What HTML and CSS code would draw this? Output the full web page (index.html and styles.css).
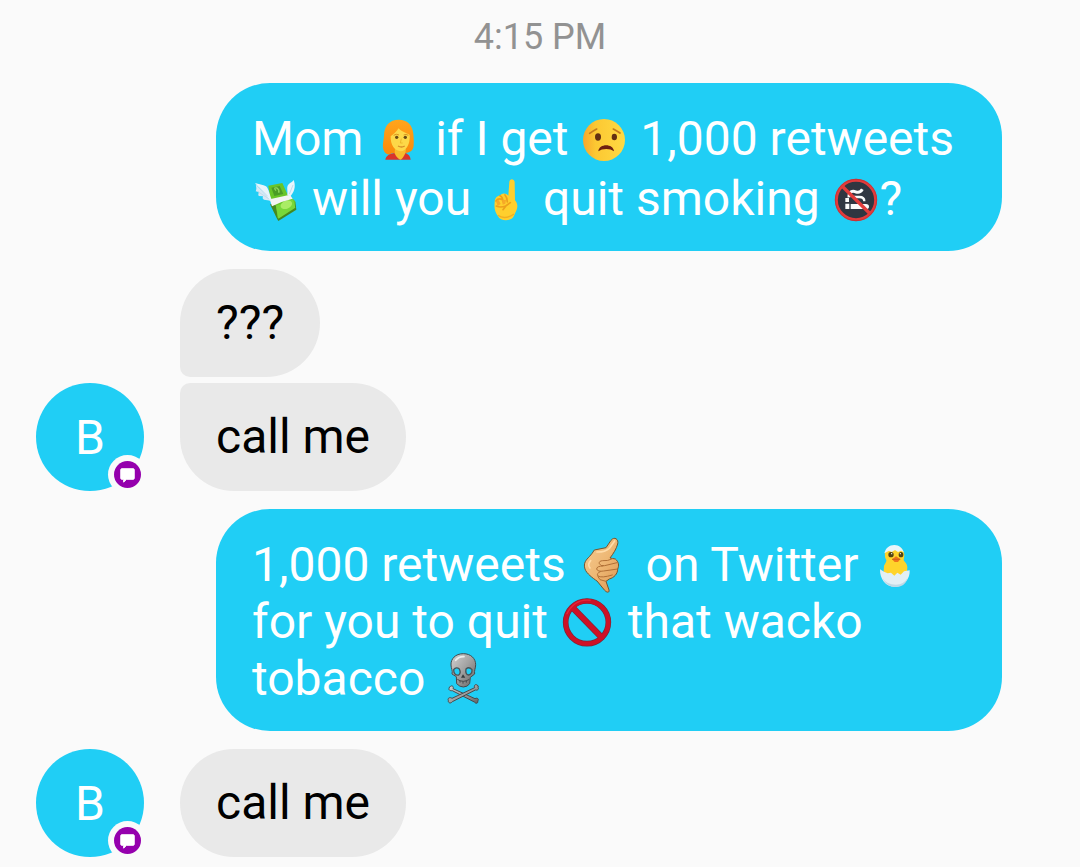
FILE: index.html
```html
<!DOCTYPE html>
<html lang="en">
<head>
<meta charset="utf-8">
<meta name="viewport" content="width=device-width, initial-scale=1">
<title>Messages</title>
<link rel="stylesheet" href="styles.css">
</head>
<body>
<main class="thread">
  <time class="stamp">4:15 PM</time>

  <p class="bubble sent roomy">Mom <svg class="emoji" viewBox="15 15 144 144" role="img" aria-label="woman">
      <defs><linearGradient id="hair" x2="0" y2="1"><stop stop-color="#ffa51c"/><stop offset="1" stop-color="#f98a0b"/></linearGradient></defs>
      <path d="M87 29C58 29 43 47 42 76C41 95 35 108 42 123C47 134 58 136 66 130L112 128C124 127 132 116 131 103C132 94 131 83 130 71C127 43 111 29 87 29Z" fill="url(#hair)"/>
      <path d="M46 149C48 136 58 131 77 128L107 129C116 133 121 139 122 149Z" fill="#d9352b"/>
      <path d="M75 116H108L106 130Q97 149 91 149Q80 145 74 130Z" fill="#f7bd2d"/>
      <path d="M62 79C69 74 79 66 86 55C94 66 109 68 119 75C121 101 109 123 93 124C74 123 61 105 62 79Z" fill="#fdd848"/>
      <path d="M71 76Q79 70 87 75M101 75Q108 71 115 76" fill="none" stroke="#d89422" stroke-width="3"/>
      <ellipse cx="80" cy="82" rx="5" ry="5" fill="#674913"/><ellipse cx="106" cy="82" rx="5" ry="5" fill="#674913"/>
      <path d="M94 86L91 99H98" fill="none" stroke="#eeb82b" stroke-width="3"/>
      <path d="M84 108Q95 114 104 108" fill="none" stroke="#d78d28" stroke-width="4"/>
    </svg> if I get <svg class="emoji" viewBox="18 15 144 144" role="img" aria-label="worried face">
      <defs><linearGradient id="face"><stop stop-color="#f7a72d"/><stop offset=".3" stop-color="#fcc832"/><stop offset="1" stop-color="#ffda43"/></linearGradient></defs>
      <circle cx="90" cy="90" r="63" fill="url(#face)"/>
      <path d="M47 70Q57 63 68 57M118 57Q129 63 138 69" fill="none" stroke="#c47b1e" stroke-width="5" stroke-linecap="round"/>
      <ellipse cx="72" cy="81" rx="9" ry="11" fill="#643012"/><ellipse cx="121" cy="81" rx="8" ry="10" fill="#643012"/>
      <path d="M73 124C75 100 118 100 120 124Q111 117 97 117Q82 117 73 124Z" fill="#6e2011"/>
    </svg> 1,000 retweets <svg class="emoji" viewBox="24 15 144 144" role="img" aria-label="money with wings">
      <path d="M78 103L98 144L103 153L157 119L154 96Z" fill="#45891f"/>
      <path d="M73 47L115 39L130 72L154 94L153 112L101 145L96 108L80 92Z" fill="#69c529"/>
      <path d="M96 107L147 87L154 113L103 146Z" fill="#78d73a"/>
      <path d="M82 53L107 48L118 72L91 78Z" fill="#4b9c26"/>
      <path d="M96 62Q87 51 99 54Q107 60 104 68" fill="none" stroke="#8ed65b" stroke-width="4"/>
      <ellipse cx="127" cy="104" rx="18" ry="12" transform="rotate(-22 127 104)" fill="#aaec65"/>
      <path d="M77 88L138 74L146 86Q114 93 84 109Z" fill="#f4f4f3"/>
      <path d="M79 94L33 39C44 43 57 43 66 49C75 57 76 73 83 89Z" fill="#e8f4fb"/>
      <path d="M35 43Q39 57 35 64L46 66Q40 73 44 78L57 79Q54 87 60 89L80 92" fill="#d7e9f5"/>
      <path d="M130 75C132 62 126 51 134 43C140 37 145 36 149 30C154 43 155 61 140 78Z" fill="#e8f4fb"/>
      <path d="M43 50L71 79M40 64L74 86M147 45L136 72" fill="none" stroke="#c0dcec" stroke-width="3"/>
    </svg> will you <svg class="emoji" viewBox="15 15 144 144" role="img" aria-label="index finger pointing up">
      <path d="M94 35C95 25 108 25 110 35L111 91C118 99 120 108 116 119L108 137C100 156 67 154 60 139C51 128 48 113 50 98C50 84 56 77 66 77C72 68 84 69 91 77Z" fill="#ffcf2d"/>
      <path d="M54 93Q61 83 73 89M66 77Q75 81 75 95M81 75Q88 83 88 96M55 108Q67 114 83 108L97 98M83 109L75 119" fill="none" stroke="#eda01c" stroke-width="5" stroke-linecap="round"/>
      <path d="M54 94L62 90L68 102L59 108ZM72 91L84 89L82 101L74 104Z" fill="#f7a928"/>
      <path d="M60 136Q80 151 108 132" fill="none" stroke="#f3af20" stroke-width="4"/>
    </svg> quit smoking <svg class="emoji" viewBox="24 15 144 144" role="img" aria-label="no smoking">
      <circle cx="96" cy="90" r="59" fill="#303641" stroke="#e33b3b" stroke-width="9"/>
      <path d="M64 101H76V117H64ZM80 102H126Q135 103 135 110Q135 117 126 117H80ZM64 84H75V96H64Z" fill="#fafafa"/>
      <path d="M75 82C74 64 86 61 96 66C105 69 111 65 115 58" fill="none" stroke="#fafafa" stroke-width="9"/>
      <path d="M88 81H106Q121 81 121 94" fill="none" stroke="#fafafa" stroke-width="7"/>
      <path d="M54 48L139 132" stroke="#e33b3b" stroke-width="10"/>
      <circle cx="96" cy="90" r="62" fill="none" stroke="#b92f35" stroke-width="2"/>
    </svg>?</p>

  <section class="received">
    <div class="messages">
      <p class="bubble plain first">???</p>
      <p class="bubble plain last">call me</p>
    </div>
    <div class="avatar">B<span class="badge"><svg viewBox="0 0 28 28" aria-hidden="true"><circle cx="14" cy="14" r="14" fill="#9500ad"/><path d="M8 8H20Q21 8 21 9V18Q21 19 20 19H13L10 22V19H8Q7 19 7 18V9Q7 8 8 8Z" fill="#fff" stroke="#fff" stroke-linejoin="round"/></svg></span></div>
  </section>

  <p class="bubble sent">1,000 retweets <svg class="emoji wide" viewBox="24 33 168 144" role="img" aria-label="call me hand">
      <defs><linearGradient id="skin" x2="1" y2="1"><stop stop-color="#f4ca91"/><stop offset=".5" stop-color="#eeb875"/><stop offset="1" stop-color="#dc9650"/></linearGradient></defs>
      <path d="M73 60L108 53L123 31C133 18 147 28 143 42C139 57 130 71 120 84L136 87C146 95 148 107 143 117C143 132 132 143 118 147L108 154L117 180C119 189 110 188 104 181L81 153C69 145 49 130 45 117C39 99 49 89 58 80Q68 69 73 60Z" fill="url(#skin)" stroke="#74542e" stroke-width="3"/>
      <path d="M128 86Q112 94 98 92Q86 93 88 101Q91 109 104 107L141 98M99 108Q80 108 80 117Q83 126 101 123L143 117M91 125Q78 130 84 138Q94 145 127 135M84 140L90 149L108 154" fill="none" stroke="#b06f35" stroke-width="3" stroke-linecap="round"/>
      <path d="M81 66Q103 67 118 55L134 33M62 92Q51 104 60 114" fill="none" stroke="#ffdca9" stroke-width="5" stroke-linecap="round"/>
    </svg> on Twitter <svg class="emoji mid" viewBox="18 33 156 144" role="img" aria-label="hatching chick">
      <path d="M63 66Q71 48 93 47Q116 50 120 69C123 77 119 83 119 91C123 97 130 102 130 112L128 138H58L60 107C64 99 68 96 67 90Q61 82 63 66Z" fill="#ffd42b"/>
      <path d="M61 70C65 54 76 45 91 45C106 45 116 55 119 67L111 62L102 66L93 60L83 66L75 62Z" fill="#eaf5fa"/>
      <ellipse cx="81" cy="74" rx="8" ry="8" fill="#514414"/><ellipse cx="111" cy="74" rx="7" ry="8" fill="#514414"/><circle cx="83" cy="71" r="2" fill="#fff"/><circle cx="109" cy="71" r="2" fill="#fff"/>
      <path d="M84 88L96 79L109 87L102 96H92Z" fill="#ef751d"/><path d="M84 88H109" stroke="#bd501b" stroke-width="2"/>
      <path d="M48 118L60 125L71 130L81 128L91 137L100 128L110 134L120 124L137 121C139 146 120 170 94 171C65 171 47 147 48 118Z" fill="#e3eff5"/>
      <path d="M55 143Q68 164 96 164Q120 163 131 143Q124 171 94 171Q67 170 55 143Z" fill="#bfd9e6"/>
    </svg> for you to quit <svg class="emoji wide" viewBox="30 24 168 144" role="img" aria-label="prohibited">
      <circle cx="111" cy="97" r="64" fill="none" stroke="#7c2638" stroke-width="17"/>
      <path d="M66 51L156 143" stroke="#7c2638" stroke-width="19"/>
      <circle cx="111" cy="97" r="64" fill="none" stroke="#ce1126" stroke-width="13"/>
      <path d="M66 51L156 143" stroke="#ce1126" stroke-width="15"/>
      <path d="M50 73Q73 25 122 31" fill="none" stroke="#e4283a" stroke-width="4"/>
    </svg> that wacko tobacco <svg class="emoji mid" viewBox="21 30 156 144" role="img" aria-label="skull and crossbones">
      <defs><linearGradient id="bone" x2="1" y2="1"><stop stop-color="#d2d2d2"/><stop offset=".5" stop-color="#a1a1a1"/><stop offset="1" stop-color="#626262"/></linearGradient></defs>
      <g fill="url(#bone)" stroke="#464b4d" stroke-width="3">
        <path d="M62 124C67 120 72 126 69 131L135 161C141 157 149 162 143 168C146 174 138 178 133 171L67 137C60 138 54 134 58 129Q56 126 62 124Z"/>
        <path d="M141 120C136 116 131 122 134 128L66 160C59 155 52 160 55 166C53 172 61 178 67 170L136 135C143 137 148 132 144 127Q147 122 141 120Z"/>
        <path d="M100 26C76 26 62 42 63 60C63 70 69 77 66 87L79 95L80 116Q89 126 100 126Q112 126 119 116L121 97L134 87C132 76 137 70 137 59C137 41 123 26 100 26Z"/>
      </g>
      <path d="M71 74Q79 64 88 72Q94 84 86 90Q71 92 71 74ZM108 72Q117 64 126 74Q127 87 116 90Q105 88 108 72Z" fill="#20cef5" stroke="#4b5356" stroke-width="4"/>
      <path d="M99 88L93 98H106Z" fill="#353b3e"/>
      <path d="M82 103Q100 115 118 103M90 106V113M99 109V116M109 106V113" fill="none" stroke="#464b4d" stroke-width="3"/>
      <path d="M77 46Q86 34 102 35" fill="none" stroke="#eee" stroke-width="5" stroke-linecap="round"/>
    </svg></p>

  <section class="received">
    <div class="messages">
      <p class="bubble plain">call me</p>
    </div>
    <div class="avatar">B<span class="badge"><svg viewBox="0 0 28 28" aria-hidden="true"><circle cx="14" cy="14" r="14" fill="#9500ad"/><path d="M8 8H20Q21 8 21 9V18Q21 19 20 19H13L10 22V19H8Q7 19 7 18V9Q7 8 8 8Z" fill="#fff" stroke="#fff" stroke-linejoin="round"/></svg></span></div>
  </section>
</main>
</body>
</html>
```
FILE: styles.css
```css
* { box-sizing: border-box; }
body {
  margin: 0;
  background: #fafafa;
  font-family: Roboto, "Liberation Sans", sans-serif;
}
.thread {
  display: flex;
  flex-direction: column;
  gap: 18px;
  padding: 10px 78px 10px 36px;
}
.stamp {
  align-self: center;
  margin-left: 42px;
  height: 55px;
  color: #929292;
  font-size: 36px;
  line-height: 54px;
}
.bubble {
  margin: 0;
  padding: 25px 36px 26px;
  border-radius: 54px;
  font-size: 48px;
  line-height: 57px;
}
.sent {
  margin-left: 180px;
  padding: 27px 36px 24px;
  background: #20cef5;
  color: #fff;
}
.roomy {
  padding: 26px 36px 22px;
  line-height: 60px;
}
.emoji {
  width: 48px;
  height: 48px;
  vertical-align: -8px;
  overflow: visible;
}
.mid { width: 52px; }
.wide { width: 56px; }
.received {
  display: flex;
  flex-direction: row-reverse;
  justify-content: flex-end;
  align-items: flex-end;
  gap: 36px;
}
.messages {
  display: flex;
  flex-direction: column;
  align-items: flex-start;
  gap: 6px;
}
.plain {
  background: #e9e9e9;
  color: #000;
}
.first { border-bottom-left-radius: 10px; }
.last { border-top-left-radius: 10px; }
.avatar {
  position: relative;
  display: grid;
  place-items: center;
  width: 108px;
  height: 108px;
  border-radius: 50%;
  background: #20cef5;
  color: #fff;
  font-size: 48px;
}
.badge {
  position: absolute;
  right: -3px;
  bottom: -3px;
  display: grid;
  place-items: center;
  width: 39px;
  height: 39px;
  border-radius: 50%;
  background: #fafafa;
}
.badge svg {
  width: 27px;
  height: 27px;
}
```
